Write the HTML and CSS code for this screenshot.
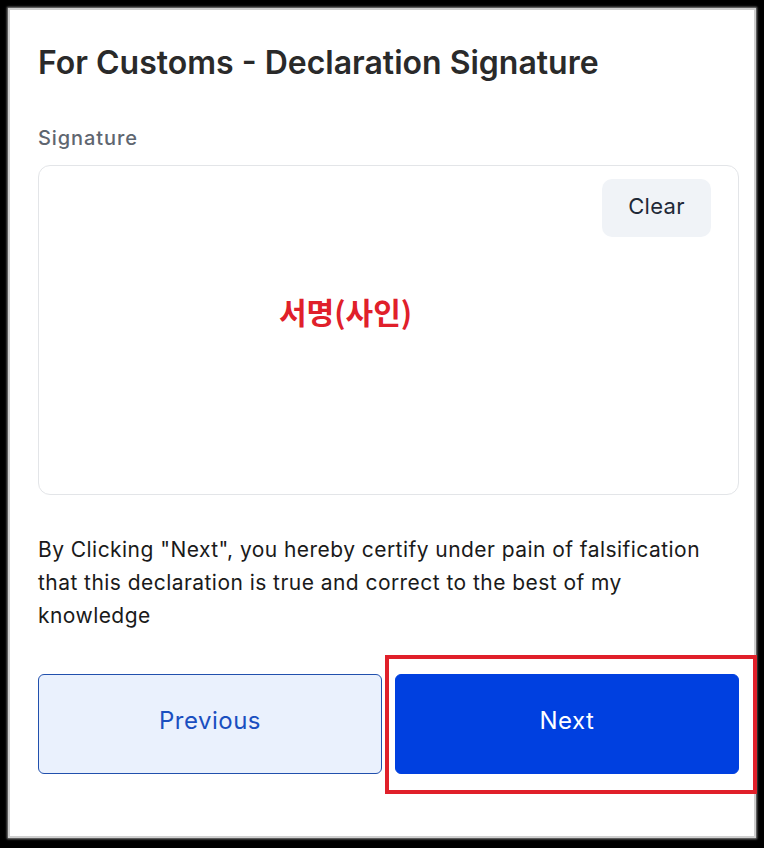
FILE: index.html
```html
<!DOCTYPE html>
<html lang="en">
<head>
<meta charset="utf-8">
<title>For Customs - Declaration Signature</title>
<link rel="stylesheet" href="styles.css">
</head>
<body>
<div class="panel">
  <h1 class="title">For Customs - Declaration Signature</h1>
  <div class="label">Signature</div>
  <div class="canvas">
    <button class="clear" type="button">Clear</button>
    <span class="annot">서명(사인)</span>
  </div>
  <p class="notice">By Clicking "Next", you hereby certify under pain of falsification that this declaration is true and correct to the best of my knowledge</p>
  <div class="actions">
    <button class="btn prev" type="button">Previous</button>
    <button class="btn next" type="button">Next</button>
  </div>
  <div class="highlight"></div>
</div>
</body>
</html>
```
FILE: styles.css
```css
html, body {
  margin: 0;
  padding: 0;
  background: #000;
}
body {
  width: 764px;
  height: 848px;
  font-family: Inter, "Noto Sans", sans-serif;
}
.panel {
  position: relative;
  box-sizing: border-box;
  margin: 8px 0 0 8px;
  width: 748px;
  height: 830px;
  background: #fff;
  border: 2px solid #cfcfcf;
  box-shadow: 0 0 2px 1px #8a8a8a;
  padding: 33px 15px 0 28px;
  display: flex;
  flex-direction: column;
}
.title {
  margin: 0;
  font-size: 32px;
  line-height: 40px;
  font-weight: 600;
  color: #2a2a2a;
}
.label {
  margin-top: 42px;
  font-size: 20px;
  line-height: 26px;
  font-weight: 500;
  letter-spacing: 0.9px;
  color: #5f6670;
}
.canvas {
  position: relative;
  box-sizing: border-box;
  margin-top: 14px;
  height: 330px;
  border: 1px solid #e3e5e8;
  border-radius: 12px;
  display: flex;
  justify-content: flex-end;
  align-items: flex-start;
  padding: 13px 27px 0 0;
}
.clear {
  width: 109px;
  height: 58px;
  border: 0;
  border-radius: 10px;
  background: #f0f3f7;
  color: #1f2937;
  font-family: inherit;
  font-size: 22px;
  letter-spacing: 0.3px;
  padding: 0 0 4px;
  cursor: pointer;
}
.annot {
  position: absolute;
  left: 240px;
  top: 127px;
  color: #e0202a;
  font-family: "Noto Sans CJK KR", "Noto Sans", sans-serif;
  font-weight: 700;
  font-size: 30px;
  line-height: 36px;
}
.notice {
  margin: 38px 0 0;
  font-size: 21px;
  line-height: 33px;
  letter-spacing: 0.45px;
  color: #1a1a1a;
}
.actions {
  margin-top: 42px;
  display: flex;
  gap: 13px;
}
.btn {
  flex: 1;
  height: 100px;
  border-radius: 6px;
  font-family: inherit;
  font-size: 24px;
  letter-spacing: 0.5px;
  padding: 0 0 8px;
  cursor: pointer;
}
.prev {
  background: #eaf1fd;
  border: 1px solid #2150ad;
  color: #1a4fc0;
}
.next {
  background: #0040e0;
  border: 1px solid #0040e0;
  color: #fff;
}
.highlight {
  position: absolute;
  left: 375px;
  top: 645px;
  width: 364px;
  height: 131px;
  border: 4px solid #e0202a;
  pointer-events: none;
}
```
